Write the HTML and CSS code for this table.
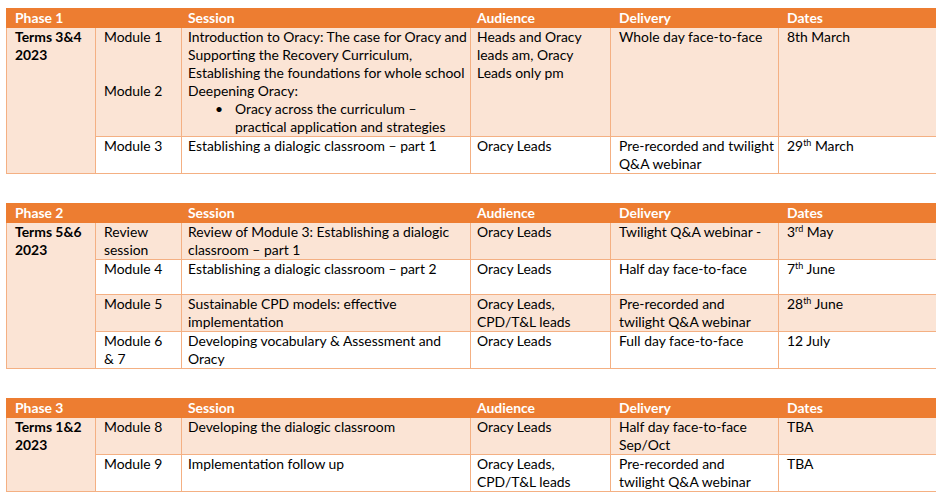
FILE: index.html
```html
<!DOCTYPE html>
<html lang="en">
<head>
<meta charset="utf-8">
<title>Oracy programme</title>
<link rel="stylesheet" href="styles.css">
</head>
<body>
<table class="plan">
  <colgroup><col class="c1"><col class="c2"><col class="c3"><col class="c4"><col class="c5"><col class="c6"></colgroup>
  <thead>
    <tr><th>Phase 1</th><th></th><th>Session</th><th>Audience</th><th>Delivery</th><th>Dates</th></tr>
  </thead>
  <tbody>
    <tr class="band tall">
      <td class="term" rowspan="2">Terms 3&amp;4<br>2023</td>
      <td>Module 1<br><br><br>Module 2</td>
      <td>Introduction to Oracy: The case for Oracy and<br>Supporting the Recovery Curriculum,<br>Establishing the foundations for whole school<br>Deepening Oracy:
        <ul class="bullets"><li>Oracy across the curriculum –<br>practical application and strategies</li></ul></td>
      <td>Heads and Oracy<br>leads am, Oracy<br>Leads only pm</td>
      <td>Whole day face-to-face</td>
      <td>8th March</td>
    </tr>
    <tr>
      <td>Module 3</td>
      <td>Establishing a dialogic classroom – part 1</td>
      <td>Oracy Leads</td>
      <td>Pre-recorded and twilight<br>Q&amp;A webinar</td>
      <td>29<sup>th</sup> March</td>
    </tr>
  </tbody>
</table>

<table class="plan">
  <colgroup><col class="c1"><col class="c2"><col class="c3"><col class="c4"><col class="c5"><col class="c6"></colgroup>
  <thead>
    <tr><th>Phase 2</th><th></th><th>Session</th><th>Audience</th><th>Delivery</th><th>Dates</th></tr>
  </thead>
  <tbody>
    <tr class="band">
      <td class="term" rowspan="4">Terms 5&amp;6<br>2023</td>
      <td>Review<br>session</td>
      <td>Review of Module 3: Establishing a dialogic<br>classroom – part 1</td>
      <td>Oracy Leads</td>
      <td>Twilight Q&amp;A webinar -</td>
      <td>3<sup>rd</sup> May</td>
    </tr>
    <tr>
      <td>Module 4</td>
      <td>Establishing a dialogic classroom – part 2</td>
      <td>Oracy Leads</td>
      <td>Half day face-to-face</td>
      <td>7<sup>th</sup> June</td>
    </tr>
    <tr class="band">
      <td>Module 5</td>
      <td>Sustainable CPD models: effective<br>implementation</td>
      <td>Oracy Leads,<br>CPD/T&amp;L leads</td>
      <td>Pre-recorded and<br>twilight Q&amp;A webinar</td>
      <td>28<sup>th</sup> June</td>
    </tr>
    <tr>
      <td>Module 6<br>&amp; 7</td>
      <td>Developing vocabulary &amp; Assessment and<br>Oracy</td>
      <td>Oracy Leads</td>
      <td>Full day face-to-face</td>
      <td>12 July</td>
    </tr>
  </tbody>
</table>

<table class="plan">
  <colgroup><col class="c1"><col class="c2"><col class="c3"><col class="c4"><col class="c5"><col class="c6"></colgroup>
  <thead>
    <tr><th>Phase 3</th><th></th><th>Session</th><th>Audience</th><th>Delivery</th><th>Dates</th></tr>
  </thead>
  <tbody>
    <tr class="band">
      <td class="term" rowspan="2">Terms 1&amp;2<br>2023</td>
      <td>Module 8</td>
      <td>Developing the dialogic classroom</td>
      <td>Oracy Leads</td>
      <td>Half day face-to-face<br>Sep/Oct</td>
      <td>TBA</td>
    </tr>
    <tr>
      <td>Module 9</td>
      <td>Implementation follow up</td>
      <td>Oracy Leads,<br>CPD/T&amp;L leads</td>
      <td>Pre-recorded and<br>twilight Q&amp;A webinar</td>
      <td>TBA</td>
    </tr>
  </tbody>
</table>
</body>
</html>
```

FILE: styles.css
```css
html, body {
  background: #ffffff;
}
body {
  margin: 8px 5px 0 6px;
  font-family: Lato, "Open Sans", "Liberation Sans", sans-serif;
  font-size: 13.9px;
  line-height: 18px;
  color: #000000;
}
.plan {
  width: 931px;
  table-layout: fixed;
  border-collapse: collapse;
  margin-bottom: 29px;
}
.c1 { width: 89px; }
.c2 { width: 86px; }
.c3 { width: 289px; }
.c4 { width: 140px; }
.c5 { width: 168px; }
.c6 { width: 158px; }
.plan th {
  background: #ed7d31;
  color: #ffffff;
  font-weight: 700;
  text-align: left;
  padding: 0 8px;
  border: 1px solid #ed7d31;
  height: 18px;
  white-space: nowrap;
}
.plan td {
  vertical-align: top;
  padding: 0 8px;
  border: 1px solid #f4b083;
  height: 34px;
  white-space: nowrap;
  overflow: hidden;
}
/* Session and Audience columns sit slightly closer to their left rule */
.plan th:nth-last-child(4),
.plan th:nth-last-child(3),
.plan td:nth-last-child(4),
.plan td:nth-last-child(3) {
  padding-left: 6px;
}
.plan tr.tall td {
  height: 106px;
}
.plan tr.band td,
.plan td.term {
  background: #fbe4d5;
}
.plan td.term {
  font-weight: 700;
}
.bullets {
  list-style: none;
  margin: 0;
  padding: 0;
}
.bullets li {
  display: flex;
}
.bullets li::before {
  content: "•";
  flex: 0 0 20px;
  margin-left: 27px;
}
sup {
  font-size: 9px;
  line-height: 0;
  vertical-align: 5px;
}
```
